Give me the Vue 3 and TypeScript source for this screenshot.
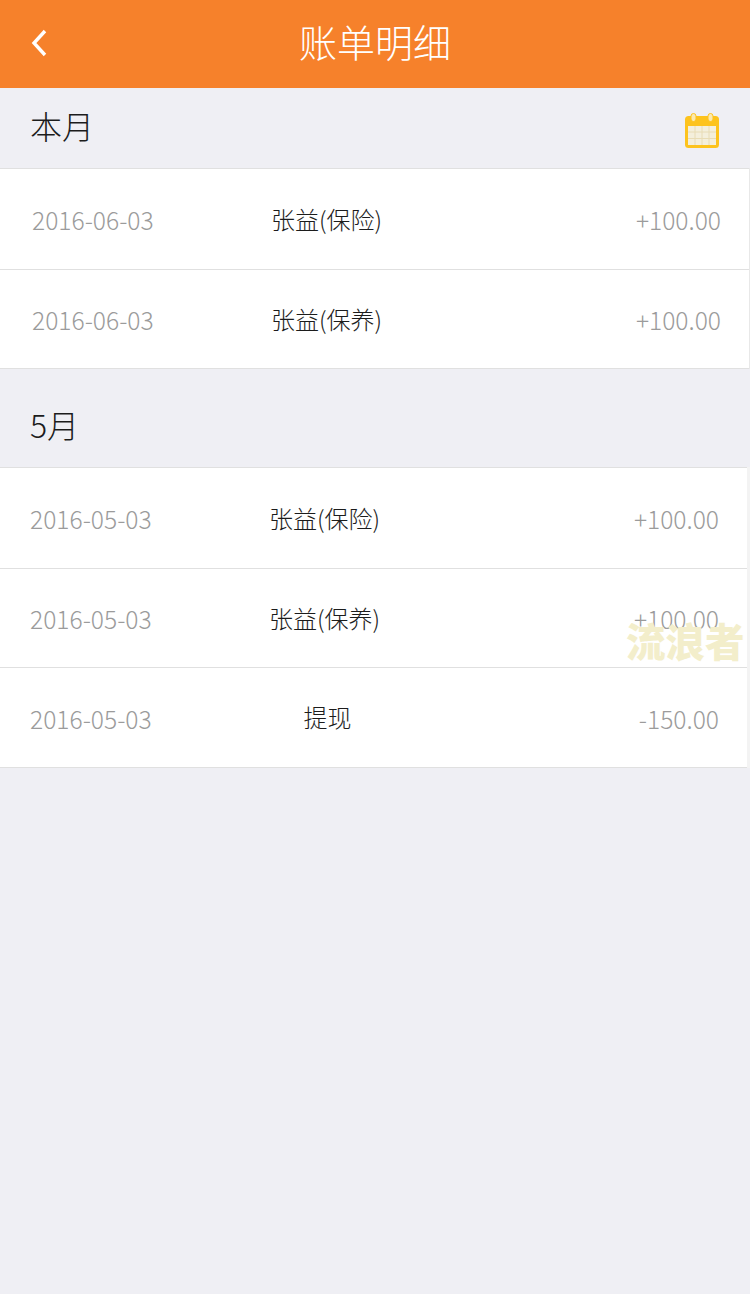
<script setup lang="ts">
interface Row { date: string; name: string; amount: string; shift?: boolean }
const sections: { title: string; narrow: boolean; rows: Row[] }[] = [
  { title: '本月', narrow: false, rows: [
    { date: '2016-06-03', name: '张益(保险)', amount: '+100.00' },
    { date: '2016-06-03', name: '张益(保养)', amount: '+100.00' },
  ] },
  { title: '5月', narrow: true, rows: [
    { date: '2016-05-03', name: '张益(保险)', amount: '+100.00' },
    { date: '2016-05-03', name: '张益(保养)', amount: '+100.00' },
    { date: '2016-05-03', name: '提现', amount: '-150.00', shift: true },
  ] },
]
</script>

<template>
  <div class="page">
    <header class="bar">
      <svg class="back" width="20" height="30" viewBox="0 0 20 30"><path d="M16 3 L5 15 L16 27" fill="none" stroke="#fff" stroke-width="3.4" /></svg>
      <h1>账单明细</h1>
    </header>
    <section v-for="(s, i) in sections" :key="i" class="section" :class="{ narrow: s.narrow }">
      <div class="head">
        <span>{{ s.title }}</span>
        <svg v-if="i === 0" class="cal" width="36" height="36" viewBox="0 0 36 36">
          <rect x="1" y="3" width="34" height="32" rx="3.5" fill="#fdc31d" />
          <rect x="7" y="0.5" width="5" height="8" rx="2.5" fill="#fbe9b0" stroke="#fdc31d" />
          <rect x="24" y="0.5" width="5" height="8" rx="2.5" fill="#fbe9b0" stroke="#fdc31d" />
          <rect x="4" y="13" width="28" height="19" fill="#f4efdc" />
          <path d="M4 19H32M4 25.5H32M11 13V32M18 13V32M25 13V32" stroke="#e8dcb6" stroke-width="1" fill="none" />
        </svg>
      </div>
      <ul class="list">
        <li v-for="(r, j) in s.rows" :key="j" class="row">
          <span class="date">{{ r.date }}</span>
          <span class="name" :class="{ shift: r.shift }">{{ r.name }}</span>
          <span class="amount">{{ r.amount }}</span>
        </li>
      </ul>
    </section>
    <div class="mark">流浪者</div>
  </div>
</template>

<style scoped>
.page {
  position: relative;
  width: 750px;
  height: 1294px;
  overflow: hidden;
  background: #efeff4;
  font-family: "Noto Sans CJK SC", "Noto Sans", sans-serif;
  font-weight: 300;
}
.bar {
  height: 88px;
  background: #f6812b;
  display: flex;
  justify-content: center;
  position: relative;
}
.bar h1 {
  margin: 0;
  color: #fff;
  font-size: 38px;
  font-weight: 300;
  line-height: 82px;
}
.back {
  position: absolute;
  left: 29px;
  top: 28px;
}
.head {
  height: 80px;
  padding: 0 30px;
  display: flex;
  align-items: center;
  justify-content: space-between;
  font-size: 32px;
  color: #1c1c1c;
}
.head span { position: relative; top: -3px; }
.cal { margin-right: 0; margin-top: 5px; }
.narrow .head { height: 98px; padding-top: 18px; box-sizing: border-box; }
.list {
  margin: 0;
  padding: 0;
  list-style: none;
  width: 749px;
  background: #fff;
  border-top: 1px solid #e0e0e0;
  box-shadow: 1px 0 0 #e8e8e8;
}
.narrow .list { width: 747px; box-shadow: 3px 0 0 #f3f3f3; }
.row {
  height: 100px;
  padding: 0 28px 0 32px;
  display: grid;
  grid-template-columns: 239px 1fr auto;
  align-items: center;
  border-bottom: 1px solid #e0e0e0;
  font-size: 24.6px;
}
.section:first-of-type .row:last-child { height: 98px; }
.narrow .row { padding-left: 30px; }
.narrow .row:nth-child(2) { height: 98px; }
.narrow .row:nth-child(3) { height: 99px; }
.date, .amount { color: #9b9b9b; }
.name {
  color: #1c1c1c;
  font-size: 24px;
  width: 110px;
  text-align: center;
  white-space: nowrap;
  position: relative;
  top: -1px;
}
.shift { padding-left: 7px; box-sizing: border-box; }
.amount { text-align: right; }
.mark {
  position: absolute;
  left: 626px;
  top: 612px;
  font-size: 39.5px;
  line-height: 56px;
  font-weight: 900;
  color: #f3eecb;
  white-space: nowrap;
}
</style>
